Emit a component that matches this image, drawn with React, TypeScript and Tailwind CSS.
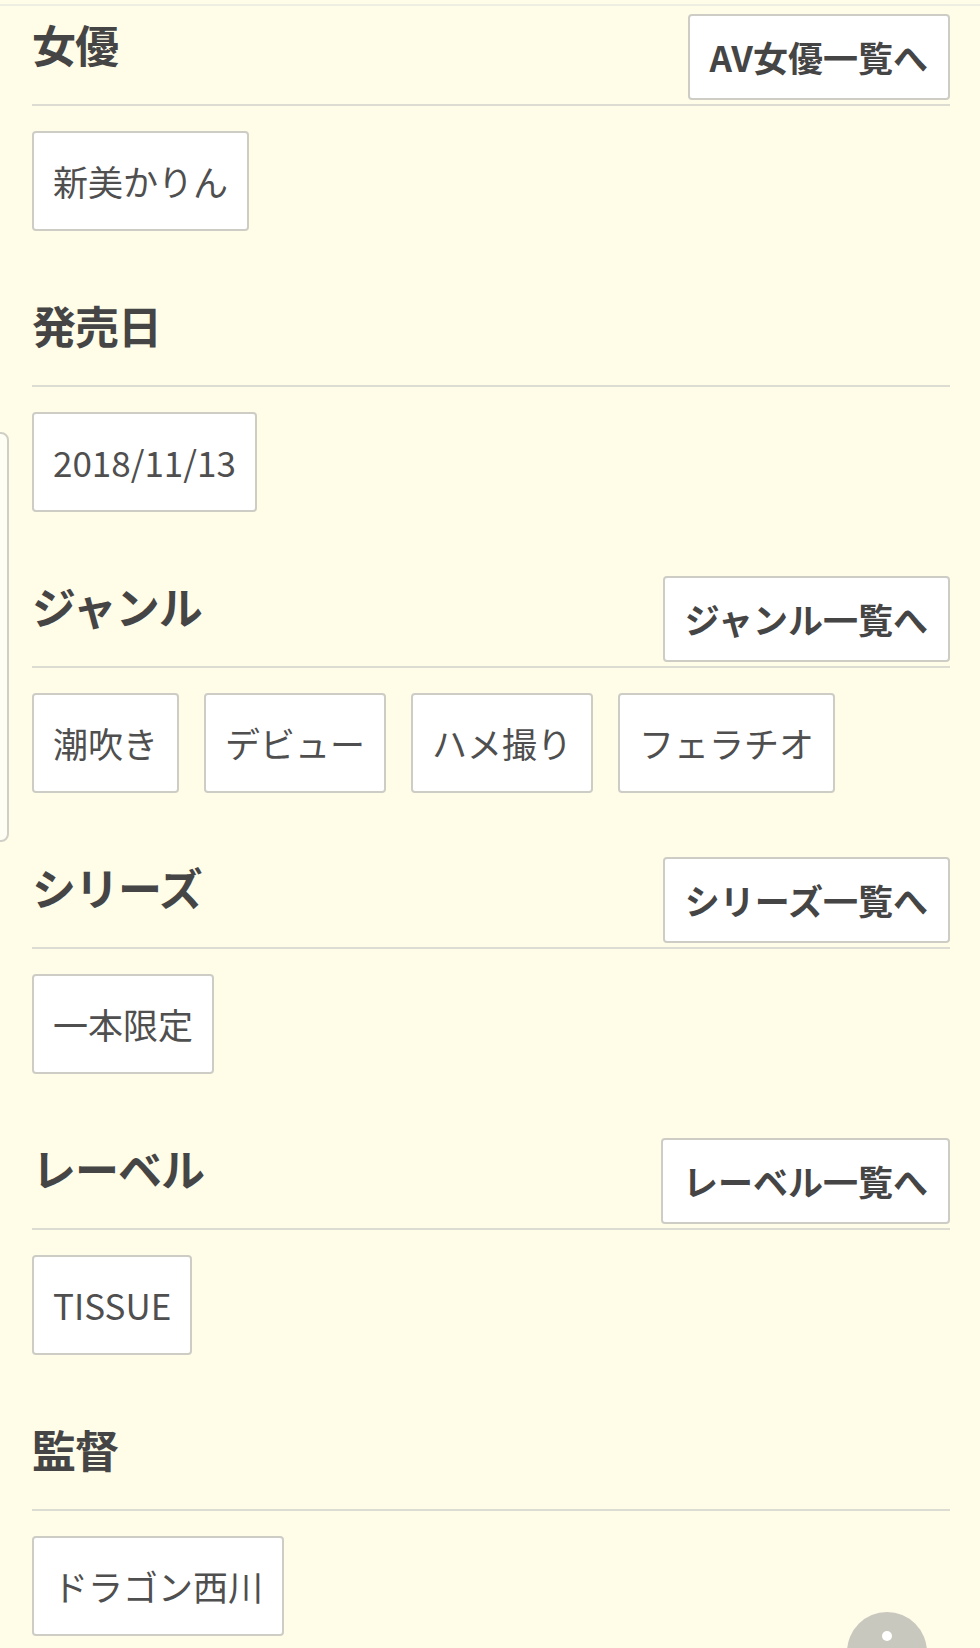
const sections: { title: string; link?: string; tags: string[] }[] = [
  { title: "女優", link: "AV女優一覧へ", tags: ["新美かりん"] },
  { title: "発売日", tags: ["2018/11/13"] },
  { title: "ジャンル", link: "ジャンル一覧へ", tags: ["潮吹き", "デビュー", "ハメ撮り", "フェラチオ"] },
  { title: "シリーズ", link: "シリーズ一覧へ", tags: ["一本限定"] },
  { title: "レーベル", link: "レーベル一覧へ", tags: ["TISSUE"] },
  { title: "監督", tags: ["ドラゴン西川"] },
];

export default function App() {
  return (
    <div
      className="relative min-h-[1648px] overflow-hidden bg-[#fffce8] text-[#4a4a4a]"
      style={{ fontFamily: '"Noto Sans CJK JP", "Noto Sans", sans-serif' }}
    >
      <div className="h-[4px]" />
      <div className="h-[2px] bg-[#efeee2]" />

      {/* 左端のタブ */}
      <div className="absolute left-[-12px] top-[432px] h-[410px] w-[21px] rounded-lg border-2 border-[#cfcfc6] bg-[#fffef4]" />

      <div className="flex flex-col gap-[64px] pl-[32px] pr-[30px] pt-[8px]">
        {sections.map((s) => (
          <section key={s.title}>
            <div className="flex h-[92px] items-start justify-between border-b-2 border-[#dcdcd2] pb-[4px]">
              <h2 className="text-[44px] font-bold leading-[60px] tracking-[-1px] text-[#454545]">
                {s.title}
              </h2>
              {s.link && (
                <a className="flex h-[86px] items-center rounded-[4px] border-2 border-[#cdcdc6] bg-white px-[20px] text-[35px] font-bold text-[#454545]">
                  {s.link}
                </a>
              )}
            </div>
            <ul className="mt-[25px] flex flex-wrap gap-[25px]">
              {s.tags.map((t) => (
                <li
                  key={t}
                  className="flex h-[100px] items-center rounded-[4px] border-2 border-[#cdcdc6] bg-white px-[19px] text-[35px] text-[#4f4f4f]"
                >
                  {t}
                </li>
              ))}
            </ul>
          </section>
        ))}
      </div>

      {/* ページトップへ */}
      <div className="absolute left-[847px] top-[1612px] flex h-[80px] w-[80px] justify-center rounded-full bg-[#c9c8bf] pt-[19px]">
        <div className="h-[10px] w-[10px] rounded-full bg-white" />
      </div>
    </div>
  );
}
